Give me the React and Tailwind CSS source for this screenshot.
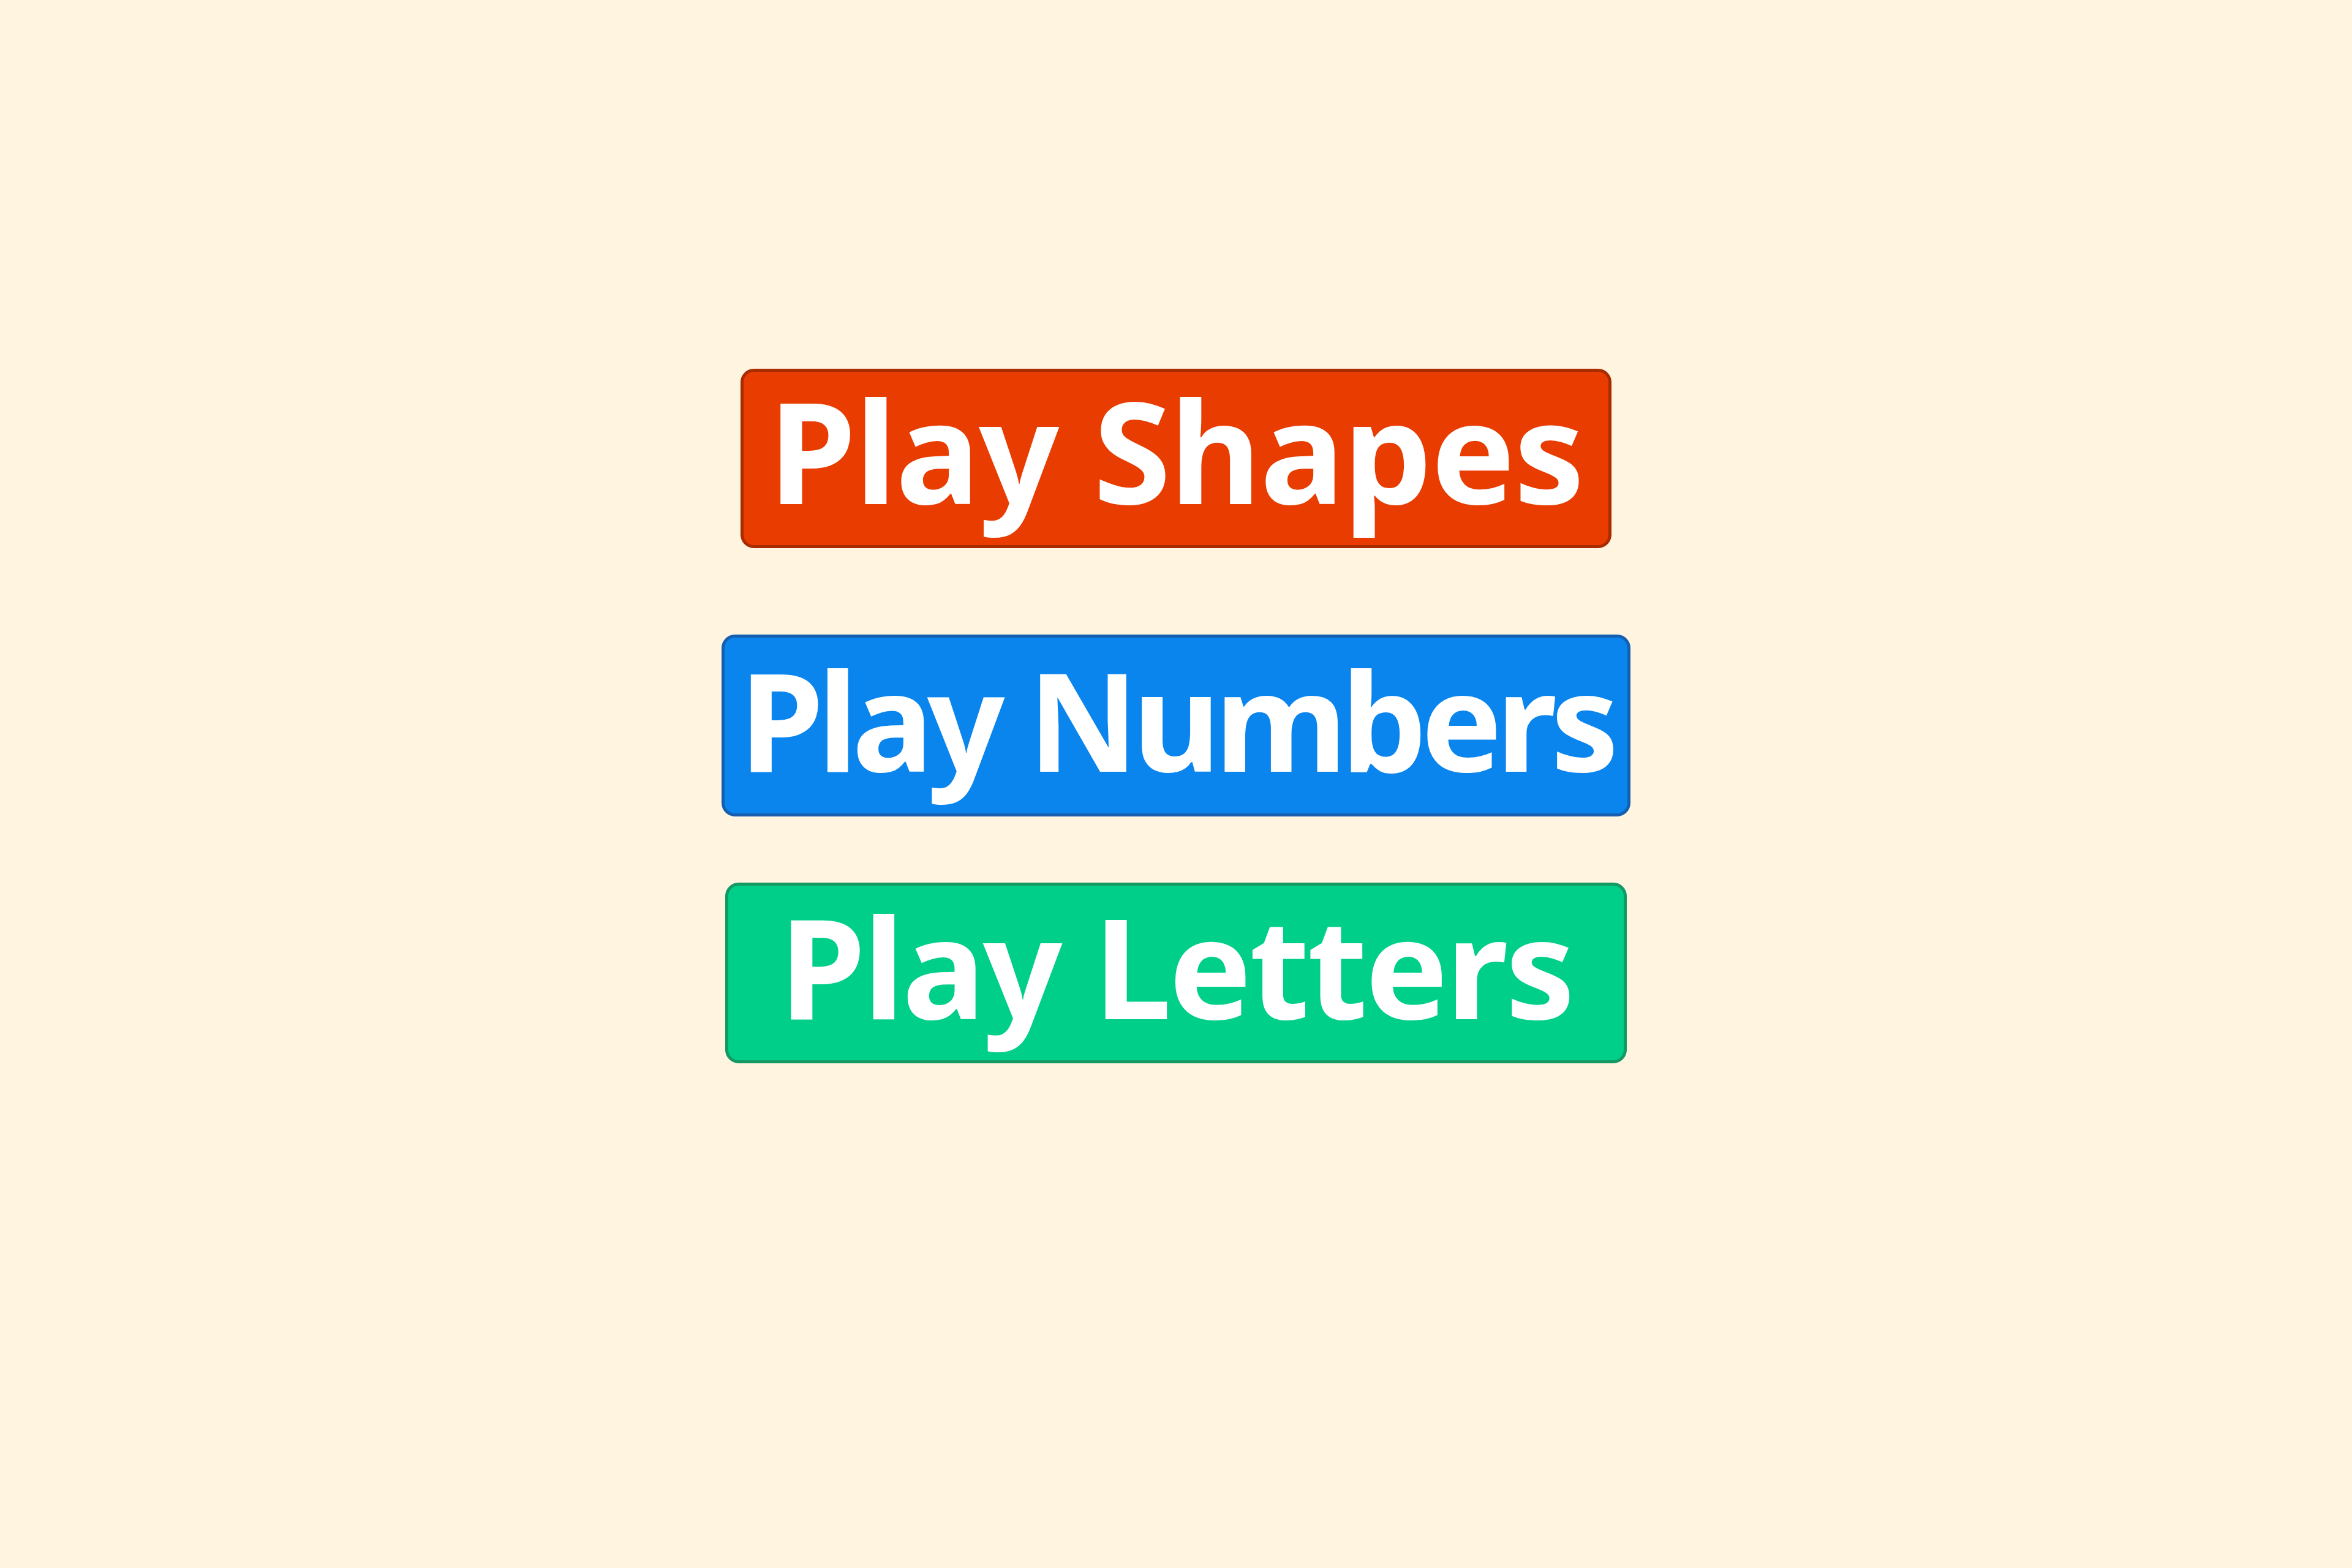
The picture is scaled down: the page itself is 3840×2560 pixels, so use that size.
export default function App() {
  return (
    <div className="w-full h-[2560px] bg-[#fff4e0] flex flex-col items-center pt-[602px]" style={{ fontFamily: '"Noto Sans", "Open Sans", sans-serif' }}>
      <button className="w-[1422px] h-[293px] rounded-[22px] bg-[#e93c00] border-[5px] border-[#a82c00] text-white font-bold text-[230px] leading-none whitespace-nowrap flex items-center justify-center pb-[30px] tracking-[-2px]">
        Play Shapes
      </button>
      <button className="mt-[141px] w-[1484px] h-[297px] rounded-[22px] bg-[#0a85ee] border-[5px] border-[#145fb0] text-white font-bold text-[222px] leading-none whitespace-nowrap flex items-center justify-center pb-[22px] tracking-[-10px]">
        Play Numbers
      </button>
      <button className="mt-[108px] w-[1472px] h-[295px] rounded-[22px] bg-[#00cf8a] border-[5px] border-[#139a64] text-white font-bold text-[227px] leading-none whitespace-nowrap flex items-center justify-center pb-[24px] tracking-[-4px]">
        Play Letters
      </button>
    </div>
  );
}
